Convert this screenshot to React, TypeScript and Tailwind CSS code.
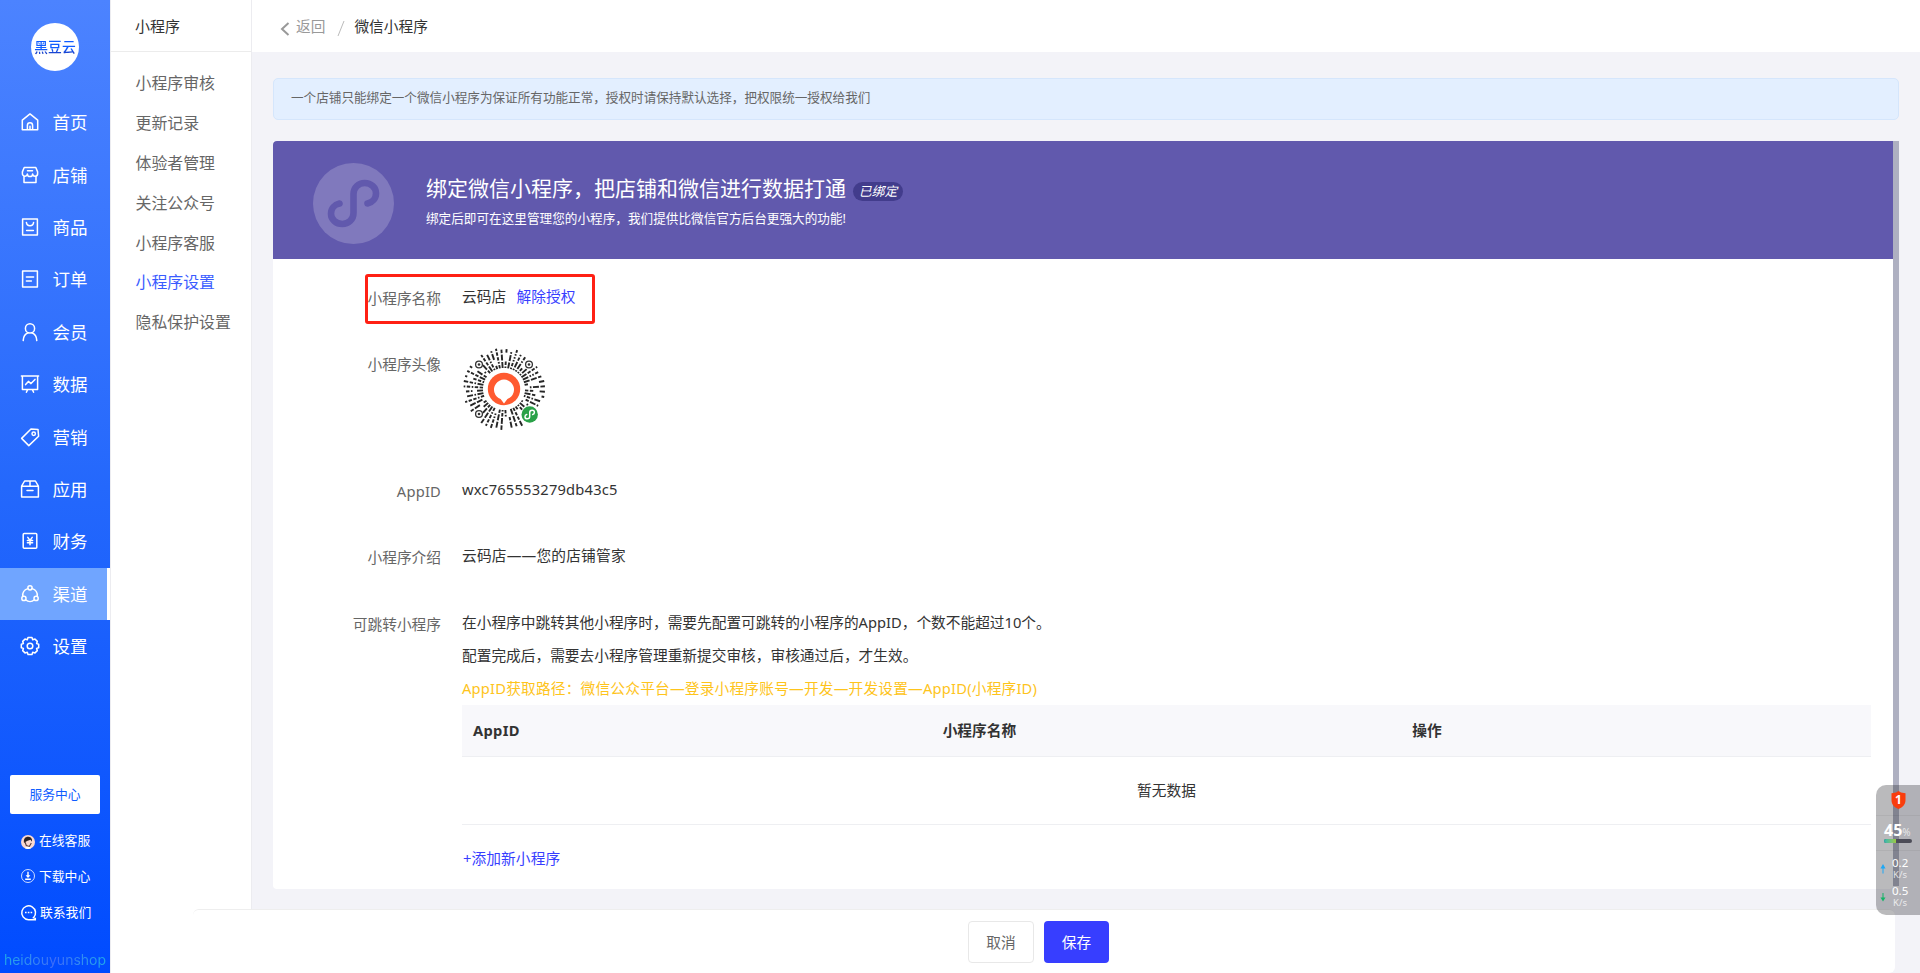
import type { ReactNode } from "react";

type IconProps = { children: ReactNode };

function NavIcon({ children }: IconProps) {
  return (
    <svg
      width="20"
      height="20"
      viewBox="0 0 20 20"
      fill="none"
      stroke="currentColor"
      strokeWidth="1.5"
      strokeLinecap="round"
      strokeLinejoin="round"
      className="shrink-0"
    >
      {children}
    </svg>
  );
}

const navItems = [
  {
    title: "首页",
    icon: <path d="M2.3 8.2 10 1.9l7.7 6.3v9.6H2.3zM7.4 17.6v-4.2a2.6 2.6 0 0 1 5.2 0v4.2M10 14.2v3.4" />,
  },
  {
    title: "店铺",
    icon: (
      <path d="M4.2 2.5h11.6l1.8 4.4v1.6a2.5 2.5 0 0 1-5 .4 2.6 2.6 0 0 1-5.2 0 2.5 2.5 0 0 1-5-.4V6.9zM4 11v6.5h12V11M7.5 5.8h5" />
    ),
  },
  {
    title: "商品",
    icon: <path d="M2.6 1.9h14.8v16.2H2.6zM6.4 5.4c.5 4.6 6.7 4.6 7.2 0M6.6 13.6h6.8" />,
  },
  {
    title: "订单",
    icon: <path d="M2.6 1.9h14.8v16.2H2.6zM6.4 8h7.2M6.4 12h5" />,
  },
  {
    title: "会员",
    icon: (
      <>
        <circle cx="10" cy="6.4" r="4.6" />
        <path d="M3.2 18.6c.2-4.3 2.4-7 5-7.8M16.8 18.6c-.2-4.3-2.4-7-5-7.8" />
      </>
    ),
  },
  {
    title: "数据",
    icon: <path d="M1.4 2h17.2M2.4 2v13.4h15.2V2M5.6 10.6 8.4 7.4l2.6 2.2 4-4.2M7.6 15.6l-1.2 2.6M12.4 15.6l1.2 2.6" />,
  },
  {
    title: "营销",
    icon: (
      <>
        <path d="M1.6 11.4 11 2l7 .4.6 6.8-9.8 9.4z" />
        <circle cx="13.7" cy="6.8" r="1.7" />
      </>
    ),
  },
  {
    title: "应用",
    icon: <path d="M1.6 7.2h16.8V18H1.6zM1.6 7.2 4.6 2h10.8l3 5.2M10 2v5M7 11.4h6" />,
  },
  {
    title: "财务",
    icon: (
      <>
        <rect x="3.2" y="2.6" width="13.6" height="14.6" rx="1" />
        <path d="m7.8 6.4 2.2 3 2.2-3M7.4 9.6h5.2M7.4 11.8h5.2M10 9.4v4.4" />
      </>
    ),
  },
  {
    title: "渠道",
    active: true,
    icon: (
      <>
        <circle cx="10" cy="3.8" r="2.1" />
        <circle cx="3.9" cy="14.4" r="2.1" />
        <circle cx="16.1" cy="14.4" r="2.1" />
        <path d="M7.8 4.6c-3.6 1.2-5.4 4.2-5 7.6M12.2 4.6c3.6 1.2 5.4 4.2 5 7.6M5.6 15.8c2.6 2.4 6.2 2.4 8.8 0" />
      </>
    ),
  },
  {
    title: "设置",
    icon: (
      <>
        <path d="M8 1.500h4l.7 2.200 2.300-.6 2.300 2.300-.7 2.200 2.100.7v3.400l-2.100.7.7 2.200-2.300 2.300-2.300-.6-.7 2.200H8l-.7-2.200-2.300.6-2.300-2.300.7-2.200-2.100-.7V8.300l2.100-.7-.7-2.200L5 3.100l2.300.6z" />
        <circle cx="10" cy="10" r="2.800" />
      </>
    ),
  },
];

const subItems = ["小程序审核", "更新记录", "体验者管理", "关注公众号", "小程序客服", "小程序设置", "隐私保护设置"];

// the double hook of the mini program mark, centred on 0,0
const HOOK =
  "M14 0C19-1 22.5-5 22.5-10.200C22.5-16 17.500-20.500 11.250-20.500S0-16 0-9.500V9.500C0 16-5 20.500-11.250 20.500S-22.500 16-22.500 10.200C-22.500 5-19 1-14 0";

function Sidebar() {
  return (
    <aside className="flex w-[110px] shrink-0 flex-col items-center bg-linear-to-b from-[#4c83ff] via-[#2468fc] to-[#004bff] text-white">
      <div className="mt-[23px] flex size-12 items-center justify-center rounded-full bg-white">
        <span className="bg-linear-to-b from-[#0f5cff] from-60% to-[#1b2a9a] bg-clip-text text-[13.8px] leading-5 font-medium text-transparent">
          黑豆云
        </span>
      </div>
      <nav className="mt-[25px] w-full">
        {navItems.map((item) => (
          <div
            key={item.title}
            className={
              item.active
                ? "flex h-[52.4px] items-center gap-[13px] border-r-3 border-white bg-[#70a5ff] pl-[19.5px]"
                : "flex h-[52.4px] items-center gap-[13px] pl-[19.5px]"
            }
          >
            <NavIcon>{item.icon}</NavIcon>
            <span className="text-[17.5px] leading-6">{item.title}</span>
          </div>
        ))}
      </nav>
      <div className="mt-[103px] flex h-[39px] w-[90px] items-center justify-center rounded-[2px] bg-white text-[12.8px] text-[#0f5cff]">
        服务中心
      </div>
      <div className="mt-4 flex w-full flex-col gap-4 pl-5 text-[12.8px] leading-5">
        <div className="flex items-center gap-[3px]">
          <svg width="16" height="16" viewBox="0 0 16 16" className="mt-1">
            <circle cx="8" cy="8" r="7" fill="#fbd9d0" />
            <path d="M4 9c-.8-4.500 1.600-6.500 4.400-6.300 3 .2 4 2.500 3.600 5l-1.500-2-3.500 1.300z" fill="#2a2426" />
            <path d="m4.800 7.500 1.500 4 3 1 2-3.500" fill="none" stroke="#5b4040" strokeWidth="1.100" />
            <path d="M5 14.200c.8-1.800 5-1.800 6 0a7 7 0 0 1-6 0z" fill="#fff" />
          </svg>
          在线客服
        </div>
        <div className="flex items-center gap-[3px]">
          <svg width="16" height="16" viewBox="0 0 16 16" fill="none" stroke="#fff" strokeWidth="1">
            <circle cx="8" cy="8" r="6.500" opacity=".8" />
            <path d="M8 3.800v5M5.200 11.200h5.600" strokeWidth="1.400" />
            <path d="M5.600 7.300h4.800L8 10z" fill="#fff" stroke="none" />
          </svg>
          下载中心
        </div>
        <div className="flex items-center gap-[3px]">
          <svg width="17" height="17" viewBox="0 0 17 17" fill="none" stroke="#fff" strokeWidth="1.500">
            <path d="M13.500 13.700a6.900 6.900 0 1 0-5 2h6.800v-1.500z" />
            <path d="M5 8.500h1.600M7.800 8.500h1.600M10.600 8.500h1.600" strokeWidth="1.600" />
          </svg>
          联系我们
        </div>
      </div>
      <div className="mt-7 bg-linear-to-r from-[#1fa8e8] via-[#3f6cf8] to-[#1fa8e8] bg-clip-text font-[Inter] text-[14px] leading-5 text-transparent">
        heidouyunshop
      </div>
    </aside>
  );
}

function SubMenu() {
  return (
    <div className="w-[142px] shrink-0 border-x border-[#ececf0] bg-white">
      <div className="flex h-[52px] items-center border-b border-[#ececec] pt-px pl-6 text-[15px] text-[#333]">小程序</div>
      <ul className="mt-3 pl-[24.5px] text-[15.9px] text-[#666]">
        {subItems.map((name) => (
          <li
            key={name}
            className={
              name === "小程序设置" ? "flex h-[39.9px] items-center text-[#3a5cff]" : "flex h-[39.9px] items-center"
            }
          >
            {name}
          </li>
        ))}
      </ul>
    </div>
  );
}

type Dash = { x1: number; y1: number; x2: number; y2: number };

// radial dashes of the circular code, from a small fixed generator
function codeDashes() {
  const dashes: Dash[] = [];
  let seed = 17;
  const next = () => {
    seed = (seed * 1103 + 12345) % 65536;
    return seed / 65536;
  };
  for (let i = 0; i < 48; i++) {
    const a = ((i + 0.5) / 48) * Math.PI * 2;
    const cos = Math.cos(a);
    const sin = Math.sin(a);
    let r = 21;
    while (r < 39) {
      const pick = next();
      const len = pick > 0.6 ? 6 : pick > 0.3 ? 3.4 : 1.6;
      const end = Math.min(r + len, 41);
      const x = cos * ((r + end) / 2);
      const y = sin * ((r + end) / 2);
      const onEye = [
        [-25, -25],
        [25, -25],
        [-25, 25],
        [26, 26],
      ].some(([ex, ey]) => Math.hypot(x - ex, y - ey) < (ex === 26 ? 10.5 : 6));
      if (!onEye && next() > 0.12) {
        dashes.push({ x1: 41 + cos * r, y1: 41 + sin * r, x2: 41 + cos * end, y2: 41 + sin * end });
      }
      r = end + 1.5;
    }
  }
  return dashes;
}

function MiniProgramCode() {
  return (
    <svg width="82" height="82" viewBox="0 0 82 82">
      <g stroke="#262626" strokeWidth="1.900">
        {codeDashes().map((d, i) => (
          <line key={i} {...d} />
        ))}
      </g>
      {[
        [16, 16.500],
        [66, 16.500],
        [16, 66],
      ].map(([cx, cy]) => (
        <g key={`${cx}-${cy}`}>
          <circle cx={cx} cy={cy} r="3.400" fill="#fff" stroke="#333" strokeWidth="1.300" />
          <circle cx={cx} cy={cy} r="1.300" fill="#333" />
        </g>
      ))}
      <circle cx="41" cy="41" r="16.200" fill="#ff5a30" />
      <path d="M41 55.500 37.600 51a10 10 0 1 1 6.800 0z" fill="#fff" />
      <circle cx="66.700" cy="66.500" r="8.200" fill="#2aa148" />
      <path d={HOOK} transform="translate(66.700 66.500) scale(.21)" fill="none" stroke="#fff" strokeWidth="7" strokeLinecap="round" />
    </svg>
  );
}

function FormRow({ label, className, children }: { label: string; className: string; children: ReactNode }) {
  return (
    <div className={`flex gap-[21px] ${className}`}>
      <div className="w-[168px] shrink-0 pt-[2px] text-right text-[#666]">{label}</div>
      <div className="flex-1 text-[#333]">{children}</div>
    </div>
  );
}

function Banner() {
  return (
    <div className="flex h-[118px] items-center rounded-tl bg-[#6159ad] pl-10 text-white">
      <svg width="81" height="81" viewBox="0 0 81 81" className="mt-[7px]">
        <circle cx="40.500" cy="40.500" r="40.500" fill="#8079bd" />
        <path d={HOOK} transform="translate(40.500 40.500)" fill="none" stroke="#6159ad" strokeWidth="6.600" strokeLinecap="round" />
      </svg>
      <div className="mt-[3px] ml-8">
        <div className="flex items-center gap-[7px]">
          <h1 className="text-[21px] leading-8">绑定微信小程序，把店铺和微信进行数据打通</h1>
          <span className="mt-[7px] flex h-[19px] w-[50px] items-center justify-center rounded-full bg-[#423c8c] text-[12.8px] italic">
            已绑定
          </span>
        </div>
        <p className="mt-[3px] text-[12.6px] leading-6 tracking-[0.03px]">
          绑定后即可在这里管理您的小程序，我们提供比微信官方后台更强大的功能!
        </p>
      </div>
    </div>
  );
}

function SettingsForm() {
  return (
    <div className="relative pt-[27px] pr-[22px] text-[14.7px] leading-[21px]">
      <div className="absolute top-[15px] left-[92px] h-[50px] w-[230px] rounded-[3px] border-3 border-[#ff2014]" />
      <FormRow label="小程序名称" className="h-[66px]">
        云码店<span className="ml-[10.5px] text-[#373eff]">解除授权</span>
      </FormRow>
      <FormRow label="小程序头像" className="h-[127px]">
        <div className="-mt-[4px] pl-px">
          <MiniProgramCode />
        </div>
      </FormRow>
      <FormRow label="AppID" className="h-[66px] tracking-[0.2px]">
        wxc765553279db43c5
      </FormRow>
      <FormRow label="小程序介绍" className="h-[61px]">
        <span className="tracking-[0.2px]">云码店——您的店铺管家</span>
      </FormRow>
      <FormRow label="可跳转小程序" className="pt-[6px]">
        <div className="-mt-[6px] leading-[33px]">
          <p>在小程序中跳转其他小程序时，需要先配置可跳转的小程序的AppID，个数不能超过10个。</p>
          <p>配置完成后，需要去小程序管理重新提交审核，审核通过后，才生效。</p>
          <p className="tracking-[0.2px] text-[#fec41c]">
            AppID获取路径：微信公众平台—登录小程序账号—开发—开发设置—AppID(小程序ID)
          </p>
        </div>
        <div className="grid h-[52px] grid-cols-3 items-center border-b border-[#eeeff2] bg-[#f8f8fb] font-bold">
          <div className="pl-[11px] tracking-[0.3px]">AppID</div>
          <div className="pl-[11px]">小程序名称</div>
          <div className="pl-[11px]">操作</div>
        </div>
        <div className="flex h-[68px] items-center justify-center border-b border-[#eeeff2]">暂无数据</div>
        <div className="mt-[23px] pl-px tracking-[0.1px] text-[#373eff]">+添加新小程序</div>
      </FormRow>
    </div>
  );
}

function SpeedWidget() {
  return (
    <div className="absolute top-[785px] right-0 flex h-[130px] w-11 flex-col rounded-l-[10px] bg-[#191c20]/30 text-white">
      <div className="flex h-[31px] justify-center border-b border-black/5 pt-[6px]">
        <svg width="15" height="18" viewBox="0 0 15 18">
          <path d="M7.500 0 10 1.600l4.500.6V9c0 4.500-2.500 7-7 9-4.500-2-7-4.500-7-9V2.200L5 1.600z" fill="#f93d0d" />
          <text x="7.500" y="13" textAnchor="middle" fontSize="12" fontWeight="700" fill="#fff">
            1
          </text>
        </svg>
      </div>
      <div className="flex h-[35px] flex-col border-b border-black/5 pt-[5px] pl-2">
        <div className="flex h-[18px] items-baseline text-[16px] leading-[18px] font-bold">
          45<span className="text-[10px] leading-[10px] font-normal text-white/70">%</span>
        </div>
        <div className="h-1 w-7 overflow-hidden rounded-full bg-[#4c4c58]">
          <div className="h-full w-3 bg-linear-to-r from-[#2bb5b0] to-[#9bc93c]" />
        </div>
      </div>
      {[
        { value: "0.2", up: true },
        { value: "0.5", up: false },
      ].map((row) => (
        <div key={row.value} className="flex h-7 items-center pt-[7px] pl-1">
          <svg width="6" height="10" viewBox="0 0 6 10">
            {row.up ? (
              <path d="M3 0 5.500 4.500h-2V9.500h-1V4.500h-2z" fill="#1fa8f5" />
            ) : (
              <path d="M3 9.500.5 5.500h2V1h1v4.500h2z" fill="#13b467" />
            )}
          </svg>
          <div className="ml-[6px] text-[11.5px] leading-[12px]">
            {row.value}
            <div className="pl-px text-[9.5px] leading-[12px] text-white/75">K/s</div>
          </div>
        </div>
      ))}
    </div>
  );
}

export default function App() {
  return (
    <div className="relative flex h-[973px] w-[1920px] overflow-hidden bg-[#f3f3f8] font-['Noto_Sans','Noto_Sans_CJK_SC',sans-serif]">
      <Sidebar />
      <SubMenu />
      <main className="flex flex-1 flex-col">
        <header className="flex h-[52px] items-center bg-white pl-7 text-[14.7px]">
          <svg width="10" height="14" viewBox="0 0 10 14" fill="none" stroke="#999" strokeWidth="2" className="mt-[5px]">
            <path d="M8.500 1 2 7l6.500 6" />
          </svg>
          <span className="ml-[6px] text-[#999]">返回</span>
          <svg width="8" height="17" viewBox="0 0 8 17" stroke="#bbb" className="mt-1 ml-3">
            <path d="M7 1 1 16" />
          </svg>
          <span className="ml-[9px] text-[#333]">微信小程序</span>
        </header>
        <div className="mt-[26px] ml-[21px] h-[42px] w-[1626px] rounded-[5px] border border-[#d5e6fc] bg-[#e3efff] pl-[17px] text-[12.6px] leading-[38px] text-[#666]">
          一个店铺只能绑定一个微信小程序为保证所有功能正常，授权时请保持默认选择，把权限统一授权给我们
        </div>
        <div className="mt-[21px] ml-[21px] flex h-[748px] w-[1626px]">
          <section className="flex-1 rounded-b bg-white">
            <Banner />
            <SettingsForm />
          </section>
          <div className="h-[745px] w-[6px] bg-[#aeb0c1]" />
        </div>
      </main>
      {/* fixed action bar over the page */}
      <div className="absolute bottom-0 left-[193px] flex h-[64px] w-[1702px] gap-[10px] rounded-md border-t border-[#eee] bg-white pt-[11px] pl-[775px] text-[14.7px]">
        <button className="h-[42px] w-[66px] rounded-[4px] border border-[#e8e8e8] text-[#666]">取消</button>
        <button className="h-[42px] w-[65px] rounded-[4px] bg-[#373eff] text-white">保存</button>
      </div>
      <SpeedWidget />
    </div>
  );
}
